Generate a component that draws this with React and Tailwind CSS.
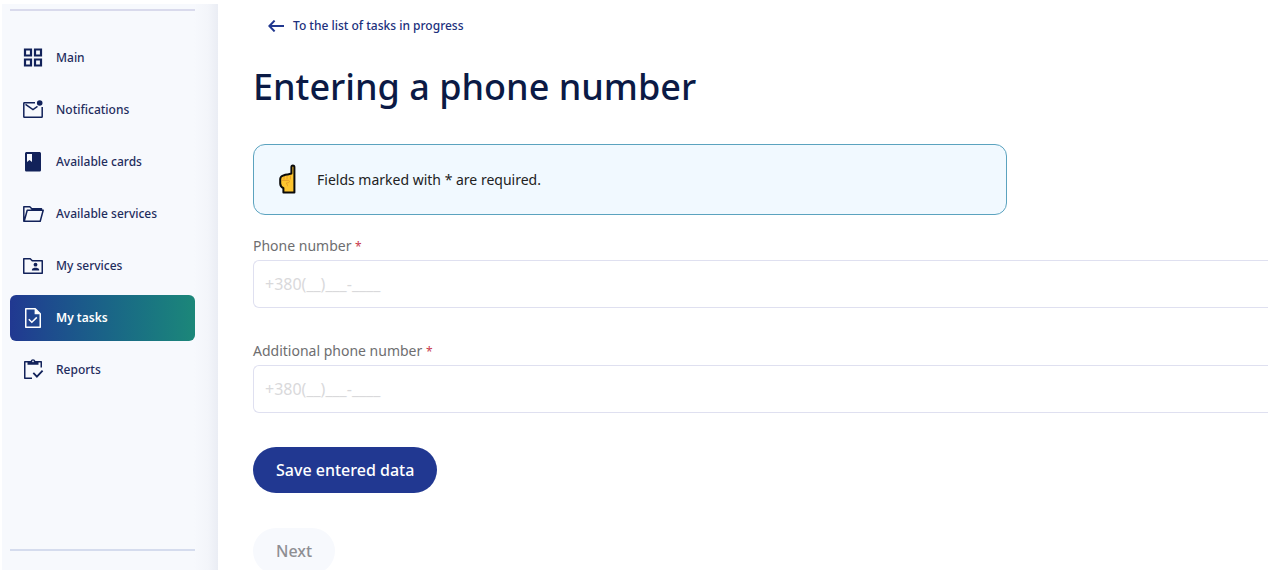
import React from 'react';

function Icon({ children }) {
  return (
    <svg className="size-6 shrink-0" viewBox="0 0 24 24" fill="none" stroke="currentColor" strokeWidth="1.5" aria-hidden="true">
      {children}
    </svg>
  );
}

const GridIcon = () => (
  <Icon>
    <path strokeWidth="2.2" d="M4 3.500h6v6H4zM14 3.500h6v6h-6zM4 13.500h6v6H4zM14 13.500h6v6h-6z" />
  </Icon>
);

const MailIcon = () => (
  <Icon>
    <path strokeLinejoin="round" d="M14 4.750H3.400a.6.6 0 0 0-.6.6v13.300c0 .3.300.6.6.6h17.200c.3 0 .6-.3.6-.6V9" />
    <path d="M4.500 6.300l7.500 5.200 4.500-3.100" />
    <circle cx="18.700" cy="5" r="2.800" fill="currentColor" stroke="none" />
  </Icon>
);

const BookIcon = () => (
  <Icon>
    <path fill="currentColor" stroke="none" fillRule="evenodd" d="M5.600 2h12.800c.9 0 1.600.7 1.600 1.600v16.300c0 .9-.7 1.600-1.600 1.600H5.600c-.9 0-1.600-.7-1.600-1.600V3.600c0-.9.7-1.600 1.600-1.600zM6 4v8l2.500-1.900L11 12V4z" />
  </Icon>
);

const FolderOpenIcon = () => (
  <Icon>
    <path strokeLinejoin="round" d="M3.200 19.200h16L22.200 8.300H6.200L3.200 19.200zM3.200 19.200H2.800V4.800h6l2 2h9.700v1.500" />
  </Icon>
);

const FolderSharedIcon = () => (
  <Icon>
    <path strokeLinejoin="round" d="M2.750 4.750h6.500l2 2h10v12.500H2.750z" />
    <circle cx="14.500" cy="10.700" r="1.900" fill="currentColor" stroke="none" />
    <path fill="currentColor" stroke="none" d="M10.900 16.500v-.8c0-1.400 2.300-2 3.600-2s3.700.6 3.700 2v.8z" />
  </Icon>
);

const TaskIcon = () => (
  <Icon>
    <path strokeLinejoin="round" d="M4.750 2.750h9.500l5 5v13.500H4.750z" />
    <path fill="currentColor" stroke="none" d="M13.600 2.500v5.700h6z" />
    <path d="M7.800 13.300l3 3 5-4.900" />
  </Icon>
);

const ReportIcon = () => (
  <Icon>
    <path strokeLinejoin="round" d="M11 20.250H3.750V3.750h16.500V9.500" />
    <path fill="currentColor" stroke="none" d="M6.500 3.200h3a2.600 2.600 0 0 1 5 0h3v3.600h-11z" />
    <circle cx="12" cy="3.400" r=".8" className="fill-[#f7f9fd]" stroke="none" />
    <path strokeWidth="1.800" d="M12.300 14.800l3.600 3.800 5.700-6" />
  </Icon>
);

const NAV = [
  { label: 'Main', icon: GridIcon },
  { label: 'Notifications', icon: MailIcon },
  { label: 'Available cards', icon: BookIcon },
  { label: 'Available services', icon: FolderOpenIcon },
  { label: 'My services', icon: FolderSharedIcon },
  { label: 'My tasks', icon: TaskIcon, active: true },
  { label: 'Reports', icon: ReportIcon },
];

function Sidebar() {
  return (
    <aside className="flex w-[216px] shrink-0 flex-col bg-[linear-gradient(to_right,#f7f9fd_calc(100%-24px),#f3f5fa_calc(100%-10px),#eaedf4)] pt-[5px] pr-[23px] pb-[19px] pl-2">
      <hr className="border-t-2 border-[#d9daec]" />
      <nav className="mt-6 flex flex-col gap-1.5">
        {NAV.map(({ label, icon: NavIcon, active }) => (
          <a
            key={label}
            href="#"
            aria-current={active ? 'page' : undefined}
            className={
              active
                ? 'flex h-[46px] items-center gap-[11px] rounded-md bg-linear-to-r from-[#213891] to-[#1c8779] px-[11px] text-xs font-semibold text-white'
                : 'flex h-[46px] items-center gap-[11px] rounded-md px-[11px] text-xs font-medium text-[#1f2d5e]'
            }
          >
            <span className={active ? 'text-white' : 'text-[#12225a]'}>
              <NavIcon />
            </span>
            {label}
          </a>
        ))}
      </nav>
      <hr className="mt-auto border-t-2 border-[#d5dcee]" />
    </aside>
  );
}

function PointingHand() {
  return (
    <svg className="h-8 w-6 shrink-0" viewBox="0 0 24 32" aria-hidden="true">
      <path
        d="M14.400 3.300c0-1 .6-1.700 1.500-1.700s1.500.7 1.500 1.700v25.100H6.400v-4.200c-1.600-.9-3.200-2.500-3.200-4.700v-4.500c0-1.700 1.600-3.200 3.300-3.400 1.500-1.100 2.700-1.300 4.300-1.200l3.600-.8z"
        fill="#fdc52f"
        stroke="#0b0b0b"
        strokeWidth="2"
        strokeLinejoin="round"
      />
      <path d="M7 12.500v3M10 12v3.300M13.400 11.500v4M5 16.400h6.500c1.200.2 1.200 1.900 0 2.200l-2.500.6c1.200.8 1.600 1.900 1.500 3" fill="none" stroke="#e0962a" strokeWidth=".8" />
    </svg>
  );
}

function PhoneField({ id, label }) {
  return (
    <div className="flex flex-col gap-1">
      <label htmlFor={id} className="text-sm leading-5 text-[#6e6e70]">
        {label} <span className="text-xs text-[#c93a4c]">*</span>
      </label>
      <input
        id={id}
        type="tel"
        required
        placeholder="+380(__)___-____"
        className="h-12 w-full rounded-l-md border border-r-0 border-[#dfe0f0] bg-white px-[11px] text-base text-[#333] outline-none placeholder:text-[#d9d9db]"
      />
    </div>
  );
}

export default function App() {
  return (
    <div className="flex h-screen overflow-hidden bg-white pt-1 pr-3.5 pb-[7px] pl-0.5 font-['Noto_Sans',sans-serif]">
      <Sidebar />
      <main className="flex min-w-0 grow flex-col items-start overflow-hidden pt-3 pl-[35px]">
        <a href="#" className="ml-[15px] flex items-center gap-[9px] text-xs leading-5 font-medium text-[#20307c]">
          <svg className="h-3 w-4" viewBox="0 0 16 12" fill="none" stroke="#21388f" strokeWidth="2" aria-hidden="true">
            <path d="M6.600.6L1.400 6l5.200 5.400M1.400 6H16" />
          </svg>
          To the list of tasks in progress
        </a>
        <h1 className="mt-6 text-4xl leading-[54px] font-medium text-[#0b1a45]">Entering a phone number</h1>
        <div className="mt-[30px] flex min-h-[71px] w-full max-w-[754px] items-center gap-4 rounded-xl border border-[#5ba3bf] bg-[#f1f9ff] px-[23px] py-4 text-sm text-[#222]">
          <PointingHand />
          <p>Fields marked with * are required.</p>
        </div>
        <form className="mt-[21px] flex w-full flex-col items-start" onSubmit={(e) => e.preventDefault()}>
          <div className="flex w-full flex-col gap-[33px]">
            <PhoneField id="phone" label="Phone number" />
            <PhoneField id="additional-phone" label="Additional phone number" />
          </div>
          <button type="submit" className="mt-[34px] h-[46px] shrink-0 rounded-full bg-[#213891] px-[23px] text-base font-medium text-white">
            Save entered data
          </button>
          <button type="button" disabled className="mt-[35px] h-[46px] shrink-0 rounded-full bg-[#f7f9fd] px-[23px] text-base font-medium text-[#8e8e93]">
            Next
          </button>
        </form>
      </main>
    </div>
  );
}
